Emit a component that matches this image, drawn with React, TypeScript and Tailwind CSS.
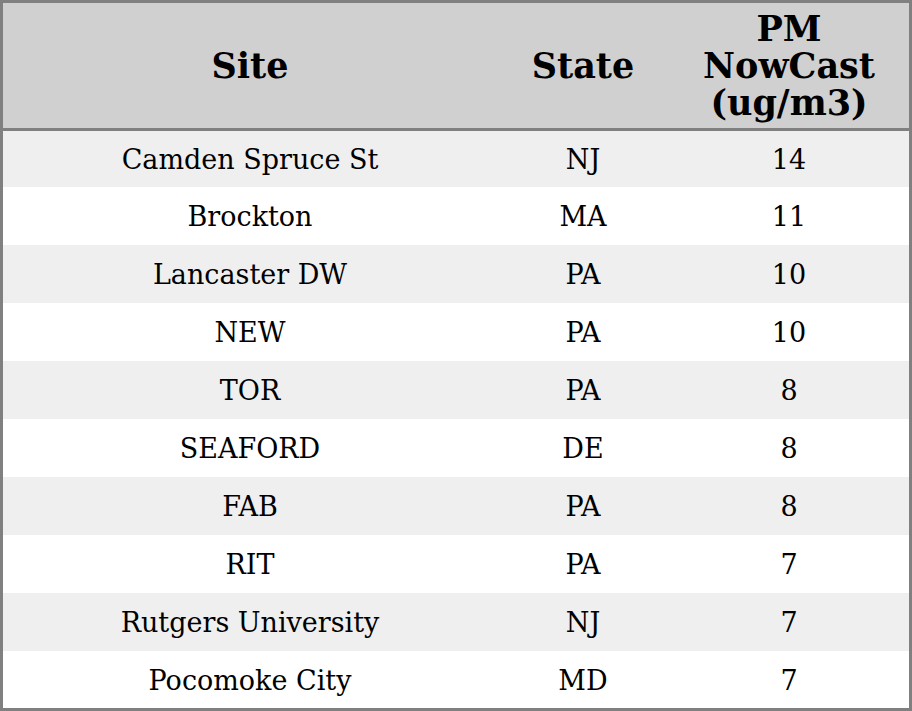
import React from "react";

const rows: [string, string, string][] = [
  ["Camden Spruce St", "NJ", "14"],
  ["Brockton", "MA", "11"],
  ["Lancaster DW", "PA", "10"],
  ["NEW", "PA", "10"],
  ["TOR", "PA", "8"],
  ["SEAFORD", "DE", "8"],
  ["FAB", "PA", "8"],
  ["RIT", "PA", "7"],
  ["Rutgers University", "NJ", "7"],
  ["Pocomoke City", "MD", "7"],
];

const heights = [
  "h-[56px]",
  "h-[58px]",
  "h-[58px]",
  "h-[58px]",
  "h-[58px]",
  "h-[58px]",
  "h-[58px]",
  "h-[58px]",
  "h-[58px]",
  "h-[57px]",
];

export default function App() {
  return (
    <div
      className="w-[912px] h-[711px] bg-white border-[3px] border-[#808080] flex flex-col text-black"
      style={{ fontFamily: '"DejaVu Serif", serif' }}
    >
      <div className="h-[125px] shrink-0 bg-[#d0d0d0] border-b-[3px] border-[#808080] box-content flex items-center font-bold text-[35px] leading-[37px]">
        <div className="w-[494px] text-center">Site</div>
        <div className="w-[172px] text-center">State</div>
        <div className="w-[240px] text-center">
          PM
          <br />
          NowCast
          <br />
          (ug/m3)
        </div>
      </div>
      <div className="flex flex-col text-[27px]">
        {rows.map((r, i) => (
          <div
            key={i}
            className={`${heights[i]} pt-[3px] flex items-center ${i % 2 === 0 ? "bg-[#efefef]" : "bg-white"}`}
          >
            <div className="w-[494px] text-center">{r[0]}</div>
            <div className="w-[172px] text-center">{r[1]}</div>
            <div className="w-[240px] text-center">{r[2]}</div>
          </div>
        ))}
      </div>
    </div>
  );
}
